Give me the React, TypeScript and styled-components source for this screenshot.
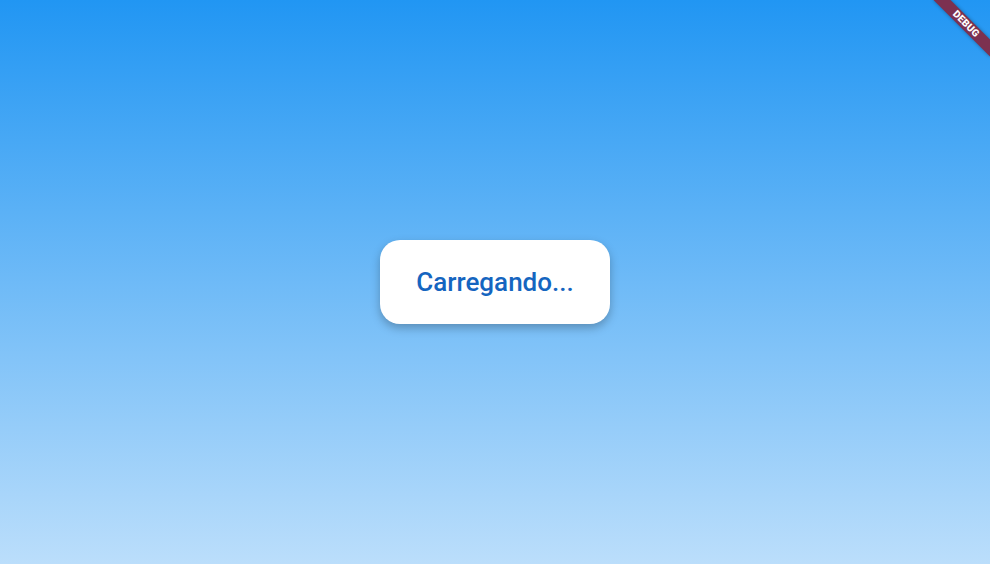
import React from 'react';
import styled, { createGlobalStyle } from 'styled-components';

const GlobalStyle = createGlobalStyle`
  html, body {
    margin: 0;
    padding: 0;
    height: 100%;
  }
  #root {
    height: 100%;
  }
`;

const Screen = styled.div`
  position: relative;
  width: 100%;
  height: 100vh;
  overflow: hidden;
  display: flex;
  align-items: center;
  justify-content: center;
  background: linear-gradient(to bottom, #2196f3 0%, #bbdefb 100%);
  font-family: Roboto, 'Noto Sans', sans-serif;
`;

const Card = styled.div`
  background: #ffffff;
  border-radius: 20px;
  padding: 27px 36px;
  box-shadow: 0 4px 10px rgba(0, 0, 0, 0.26);
`;

const Label = styled.span`
  display: block;
  font-size: 26px;
  font-weight: 500;
  line-height: 30px;
  color: #1565c0;
  white-space: nowrap;
`;

// flutter's debug ribbon in the top right corner
const Banner = styled.div`
  position: absolute;
  top: 18px;
  right: -16px;
  width: 80px;
  height: 12px;
  transform: rotate(45deg);
  background: #7c3150;
  box-shadow: 0 0 4px rgba(0, 0, 0, 0.35);
  display: flex;
  align-items: center;
  justify-content: center;
  color: #fff;
  font-size: 10px;
  font-weight: 900;
  line-height: 1;
  letter-spacing: 0.2px;
`;

export default function App() {
  return (
    <>
      <GlobalStyle />
      <Screen>
        <Card>
          <Label>Carregando...</Label>
        </Card>
        <Banner>DEBUG</Banner>
      </Screen>
    </>
  );
}
